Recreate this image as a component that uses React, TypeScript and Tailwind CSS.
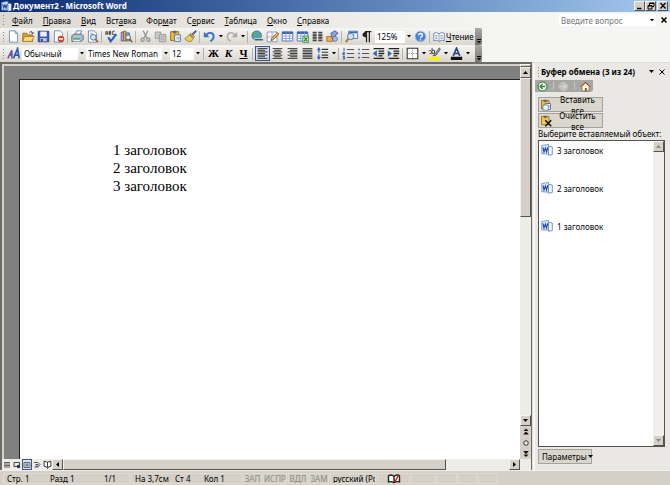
import React from "react";
import clsx from "clsx";

type GlyphProps = { children: React.ReactNode; className?: string };

function Glyph({ children, className = "size-[13px]" }: GlyphProps) {
  return (
    <svg viewBox="0 0 16 16" className={clsx("shrink-0", className)} fill="none" aria-hidden="true">
      {children}
    </svg>
  );
}

const wordDoc = (
  <>
    <path d="M10 3l5 1v10l-5 1z" fill="#fff" stroke="#3f68b8" />
    <path d="M1 2l9-1.5v13L1 13z" fill="#dce8fb" stroke="#5b83cc" />
    <path d="M2.500 4.500l1.500 6 1.800-5 1.600 5 1.600-6" stroke="#1f4ba5" strokeWidth="1.600" />
  </>
);

const sheet = <path d="M3 1h7l3 3v11H3z" fill="#fff" stroke="#6280b0" />;

const clipboard = (
  <>
    <path d="M2 2h10v11H2z" fill="#e8b93e" stroke="#8a651a" />
    <path d="M5 1h4v3H5z" fill="#667" />
    <path d="M7 6h7v8H7z" fill="#fff" stroke="#3a5a9a" />
    <path d="M9 9h4M9 11h4" stroke="#6a89c4" />
  </>
);

const gridLines = (
  <>
    <path d="M1.500 2.500h13v11h-13z" fill="#fff" stroke="#3c62ad" />
    <path d="M1.500 3.500h13" stroke="#3c62ad" strokeWidth="3" />
    <path d="M1.500 7.500h13M1.500 10.500h13M6 3v11M10.500 3v11" stroke="#7e9bd0" />
  </>
);

const icons: Record<string, React.ReactNode> = {
  new: (
    <>
      {sheet}
      <path d="M10 1v3h3" stroke="#6280b0" />
    </>
  ),
  open: (
    <>
      <path d="M1 4h5l1 2h6v8H1z" fill="#d7a33a" stroke="#8d6a1d" />
      <path d="M3 8h12l-3 6H1z" fill="#ffdf7d" stroke="#9b7522" />
      <path d="M9 3c2-2 4-1 4 1m-1.500-1L13 5l1.500-2" stroke="#335" />
    </>
  ),
  save: (
    <>
      <path d="M1.500 1.500h13v13h-13z" fill="#4659b8" stroke="#27367e" />
      <path d="M4 2h8v6H4z" fill="#e9effc" />
      <path d="M4 10h8v4H4z" fill="#bcc7e2" />
      <path d="M5 11h2v3H5z" fill="#27367e" />
    </>
  ),
  permission: (
    <>
      {sheet}
      <circle cx="11" cy="11" r="4" fill="#d9402b" />
      <path d="M8.500 11h5" stroke="#fff" strokeWidth="2" />
    </>
  ),
  print: (
    <>
      <path d="M5 6l2-5h6l-2 5z" fill="#fff" stroke="#51749c" />
      <path d="M1 7l3-2h9l2 2v5l-3 2H1z" fill="#aebdcc" stroke="#4b5f73" />
      <path d="M3 10h8v2H3z" fill="#3fa95b" />
      <path d="M3 13h8" stroke="#e8edf2" strokeWidth="2" />
    </>
  ),
  preview: (
    <>
      {sheet}
      <path d="M5 4h4M5 6h4" stroke="#8da5cc" />
      <circle cx="9" cy="9" r="3.500" fill="#cfe4f7" stroke="#4a5c74" />
      <path d="M11.500 11.500L15 15" stroke="#a0692a" strokeWidth="2" />
    </>
  ),
  spelling: (
    <>
      <path d="M1 6V2h2v4M1 4h2M5 1.500v4h2v-2H5h2v-2zM12 1.500H9.500v4H12" stroke="#333" />
      <path d="M4 9l3 5 7-9" stroke="#2c5fc4" strokeWidth="2.500" />
    </>
  ),
  research: (
    <>
      <path d="M1.500 2.500h3v11h-3z" fill="#b7a5d6" stroke="#5b4a87" />
      <path d="M4.500 1.500h3v12h-3z" fill="#e7bf65" stroke="#7a5d22" />
      <path d="M7.500 3.500h4v10h-4z" fill="#93afd9" stroke="#42639b" />
      <circle cx="10" cy="9" r="3" fill="#dcecf8" stroke="#555" />
      <path d="M12 11l3 4" stroke="#8f5f27" strokeWidth="2" />
    </>
  ),
  cut: (
    <>
      <path d="M5 1l5 9M11 1L6 10" stroke="#909090" strokeWidth="1.500" />
      <circle cx="4.500" cy="12" r="2" stroke="#909090" strokeWidth="1.500" />
      <circle cx="11.500" cy="12" r="2" stroke="#909090" strokeWidth="1.500" />
    </>
  ),
  copy: (
    <>
      <path d="M1.500 2.500h7v8h-7z" fill="#c9c9c9" stroke="#999" />
      <path d="M6.500 5.500h8v9h-8z" fill="#ccc" stroke="#929292" />
      <path d="M8 8h5M8 10h5M8 12h5" stroke="#aaa" />
    </>
  ),
  paste: clipboard,
  brush: (
    <>
      <path d="M15 1l-5 5" stroke="#4b5c9b" strokeWidth="2.500" />
      <path d="M8 4l5 4-4 6c-3 1-6-1-8-3z" fill="#ebce53" stroke="#91752b" />
      <path d="M7 6l4 3" stroke="#7b7b90" strokeWidth="2" />
    </>
  ),
  undo: (
    <>
      <path d="M4 6c4-5 10-2 9 3-.4 2-2 4-4 5" stroke="#3a70cc" strokeWidth="2.400" />
      <path d="M1 2v7h7z" fill="#3a70cc" />
    </>
  ),
  redo: (
    <>
      <path d="M12 6C8 1 2 4 3 9c.4 2 2 4 4 5" stroke="#b0b0b0" strokeWidth="2" />
      <path d="M15 2v7H8z" fill="#aaa" />
    </>
  ),
  link: (
    <>
      <circle cx="7" cy="7" r="5.800" fill="#4f9bd0" stroke="#31638f" />
      <path d="M3 4c2-3 5-2 5 0s-4 2-3 5c-2 0-3-2-2-5zM9 7l3-2v5l-3 1z" fill="#58b45f" />
      <path d="M5 12h4m1 0h4" stroke="#dce3e8" strokeWidth="4" strokeLinecap="round" />
      <path d="M5 12h4m1 0h4" stroke="#4d5f6d" strokeWidth="2" strokeLinecap="round" />
    </>
  ),
  borders: (
    <>
      <path d="M1.500 2.500h12v12h-12z" fill="#fff" stroke="#6b87b9" />
      <path d="M1 8.500h12M7.500 2v12" stroke="#8da5cf" />
      <path d="M14 3l-7 7-1 3 3-1 7-7z" fill="#e9b355" stroke="#80571d" />
    </>
  ),
  table: gridLines,
  excel: (
    <>
      {gridLines}
      <path d="M8.500 7.500h7v8h-7z" fill="#e4f4e3" stroke="#29853b" />
      <path d="M10 9l4 5m0-5l-4 5" stroke="#29853b" strokeWidth="1.500" />
    </>
  ),
  columns: (
    <path d="M2 3h5M2 5h5M2 7h5M2 9h5M2 11h5M2 13h5M9 3h5M9 5h5M9 7h5M9 9h5M9 11h5M9 13h5" stroke="#444" strokeWidth="1.400" />
  ),
  drawing: (
    <>
      <path d="M1 8h7v6H1z" fill="#efb44b" stroke="#9a6b1e" />
      <path d="M6 4l5-3 4 3-3 2-1 7-3-2z" fill="#8e9ee0" stroke="#424c94" />
      <circle cx="11" cy="11" r="3" fill="#aebbe9" stroke="#5662a8" />
    </>
  ),
  map: (
    <>
      <path d="M4.500 1.500h11v9h-11z" fill="#eaf2fd" stroke="#3c6db6" />
      <path d="M5 3h10" stroke="#3c6db6" strokeWidth="2" />
      <circle cx="7" cy="8" r="4" fill="#c9e2f5" stroke="#4d6a8c" />
      <path d="M4 11l-3 4" stroke="#b07a34" strokeWidth="2.500" />
    </>
  ),
  pilcrow: (
    <>
      <path d="M8 2v13M11.500 2v13M6 2h8" stroke="#222" strokeWidth="1.500" />
      <path d="M8 2v7C1 9 2 2 8 2z" fill="#222" />
    </>
  ),
  help: (
    <>
      <circle cx="8" cy="8" r="6.500" fill="#4c82d6" stroke="#9db9e6" />
      <path d="M5.800 6.500c0-3 4.600-3 4.600 0 0 1.500-2.300 1.500-2.300 3.500M8 11.500v1.500" stroke="#fff" strokeWidth="1.700" />
    </>
  ),
  book: (
    <>
      <path d="M1 3c3-1 5-1 7 1 2-2 4-2 7-1v10c-3-1-5-1-7 1-2-2-4-2-7-1z" fill="#fff" stroke="#4b68a2" />
      <path d="M8 4v10M3 6h3M3 8h3M3 10h3M10 6h3M10 8h3M10 10h3" stroke="#6d85b4" />
    </>
  ),
  styles: (
    <>
      <path d="M1 14L6 4v10M3 10h3" stroke="#7154a6" strokeWidth="2" />
      <path d="M8 14L13 2l2 12M9 10h5" stroke="#2e58b5" strokeWidth="2" />
    </>
  ),
  left: <path d="M2 2h12M2 4h9M2 6h12M2 8h9M2 10h12M2 12h9M2 14h12" stroke="#333" strokeWidth="1.200" />,
  center: <path d="M2 2h12M4 4h8M2 6h12M4 8h8M2 10h12M4 12h8M2 14h12" stroke="#333" strokeWidth="1.200" />,
  right: <path d="M2 2h12M5 4h9M2 6h12M5 8h9M2 10h12M5 12h9M2 14h12" stroke="#333" strokeWidth="1.200" />,
  justify: <path d="M2 2h12M2 4h12M2 6h12M2 8h12M2 10h12M2 12h12M2 14h12" stroke="#333" strokeWidth="1.200" />,
  spacing: (
    <>
      <path d="M7 3h8M7 6.500h8M7 10h8M7 13h8" stroke="#333" strokeWidth="1.400" />
      <path d="M3.500 3v10" stroke="#2e62bd" strokeWidth="1.500" strokeDasharray="4 2" />
      <path d="M3.500 0L6 4H1zM3.500 16L6 12H1z" fill="#2e62bd" />
    </>
  ),
  numbering: (
    <>
      <path d="M6 3h9M6 8h9M6 13h9" stroke="#555" strokeWidth="1.300" />
      <path d="M2.500 1v4M1 6.500h2v1.500H1v1.500h2.500M1 11.500h2v3.500H1m0-2h2" stroke="#2e62bd" strokeWidth="1.200" />
    </>
  ),
  bullets: (
    <>
      <path d="M6 3h9M6 8h9M6 13h9" stroke="#555" strokeWidth="1.300" />
      <path d="M1.500 2h2v2h-2zM1.500 7h2v2h-2zM1.500 12h2v2h-2z" fill="#2e62bd" />
    </>
  ),
  outdent: (
    <>
      <path d="M2 2h13M8 5h7M8 8h7M8 11h5M2 14h13" stroke="#222" strokeWidth="1.600" />
      <path d="M6 4L1 8l5 4z" fill="#2e62bd" />
    </>
  ),
  indent: (
    <>
      <path d="M2 2h13M8 5h7M8 8h7M8 11h5M2 14h13" stroke="#222" strokeWidth="1.600" />
      <path d="M1 4l5 4-5 4z" fill="#2e62bd" />
    </>
  ),
  outline: (
    <>
      <path d="M1.500 1.500h13v13h-13z" fill="#fff" stroke="#333" strokeWidth="1.300" />
      <path d="M3 8h11M8 3v11" stroke="#777" strokeDasharray="1.500 1.500" />
    </>
  ),
  highlight: (
    <>
      <path d="M1 5c2-2 4 0 3 3H2m3-7v7h3V4H5" stroke="#333" />
      <path d="M14 1L8 9l-2 2 4-1 5-7z" fill="#9aa4c0" stroke="#444c62" />
      <path d="M1 12h14v4H1z" fill="#fff200" />
    </>
  ),
  fontColor: (
    <>
      <path d="M4 11L8 1.500 12 11M5.500 8h5" stroke="#26428a" strokeWidth="2" />
      <path d="M1 12h14v4H1z" fill="#111" />
    </>
  ),
  pasteAll: (
    <>
      {clipboard}
      <path d="M4 8h7v7H4z" fill="#f4f8ff" stroke="#57719f" />
    </>
  ),
  clearAll: (
    <>
      <path d="M2 2h10v11H2z" fill="#f3c649" stroke="#8a651a" />
      <path d="M5 1h4v3H5z" fill="#667" />
      <path d="M7 7l8 8m0-8l-8 8" stroke="#111" strokeWidth="2" />
    </>
  ),
  back: (
    <>
      <circle cx="8" cy="8" r="6.500" fill="#f2faef" stroke="#35723a" strokeWidth="1.500" />
      <path d="M12 8H5m3-3.500L4.500 8 8 11.500" stroke="#2c8a37" strokeWidth="2" />
    </>
  ),
  forward: (
    <>
      <circle cx="8" cy="8" r="6" fill="#bcbcbc" stroke="#cfcfcf" />
      <path d="M4 8h7M8 4.500l3.500 3.500L8 11.500" stroke="#ddd" strokeWidth="1.500" />
    </>
  ),
  home: (
    <>
      <path d="M3 8v6.500h10V8" fill="#fff" stroke="#7b5c40" />
      <path d="M1 9l7-7 7 7" fill="#fff1c6" stroke="#9c4c27" strokeWidth="1.500" />
      <path d="M7 10h3v5H7z" fill="#95602a" />
    </>
  ),
};

function Caret({ className = "w-[5px]" }: { className?: string }) {
  return (
    <svg viewBox="0 0 5 3" className={clsx("shrink-0", className)} aria-hidden="true">
      <path d="M0 0h5L2.500 3z" fill="currentColor" />
    </svg>
  );
}

function Grip() {
  return (
    <span className="flex w-[6px] shrink-0 flex-col items-center gap-[2px]">
      <i className="size-px bg-[#8a8780]" />
      <i className="size-px bg-[#8a8780]" />
      <i className="size-px bg-[#8a8780]" />
      <i className="size-px bg-[#8a8780]" />
    </span>
  );
}

function Separator() {
  return <span className="mx-px h-3 w-[2px] shrink-0 border-l border-[#b5b2aa]" />;
}

function Tool({ icon, label, active }: { icon: string; label: string; active?: boolean }) {
  return (
    <button
      type="button"
      aria-label={label}
      className={clsx(
        "flex h-[15px] w-[15px] shrink-0 items-center justify-center",
        active && "border border-[#3a548e] bg-[#d5dae8]"
      )}
    >
      <Glyph>{icons[icon]}</Glyph>
    </button>
  );
}

function MenuArrow({ label }: { label: string }) {
  return (
    <button type="button" aria-label={label} className="flex h-[15px] w-[7px] shrink-0 items-center justify-center">
      <Caret className="w-1" />
    </button>
  );
}

function Combo({ label, value, className }: { label: string; value: string; className: string }) {
  return (
    <label className={clsx("mr-px flex h-3 shrink-0 items-center", className)}>
      <select aria-label={label} className="h-3 min-w-0 flex-1 appearance-none bg-white pl-[2px] leading-3">
        <option>{value}</option>
      </select>
      <span className="flex w-[7px] justify-center">
        <Caret className="w-1" />
      </span>
    </label>
  );
}

function ToolbarEnd() {
  return (
    <button
      type="button"
      aria-label="Параметры панели инструментов"
      className="ml-auto flex h-[17px] w-[7px] shrink-0 flex-col items-center justify-end gap-px rounded-r-[2px] bg-linear-to-b from-[#aaa8a3] to-[#777571] pb-[2px]"
    >
      <span className="h-px w-1 bg-black" />
      <Caret className="w-1" />
    </button>
  );
}

const toolbarClass =
  "flex h-[17px] w-[482px] items-center rounded-r-[2px] bg-linear-to-b from-[#f7f6f4] to-[#d9d6cd]";

function StandardToolbar() {
  return (
    <div role="toolbar" className={toolbarClass}>
      <Grip />
      <Tool icon="new" label="Создать" />
      <Tool icon="open" label="Открыть" />
      <Tool icon="save" label="Сохранить" />
      <Tool icon="permission" label="Разрешения" />
      <Separator />
      <Tool icon="print" label="Печать" />
      <Tool icon="preview" label="Просмотр" />
      <Separator />
      <Tool icon="spelling" label="Правописание" />
      <Tool icon="research" label="Справочные материалы" />
      <Separator />
      <Tool icon="cut" label="Вырезать" />
      <Tool icon="copy" label="Копировать" />
      <Tool icon="paste" label="Вставить" />
      <Tool icon="brush" label="Формат по образцу" />
      <Separator />
      <Tool icon="undo" label="Отменить" />
      <MenuArrow label="Отменить действия" />
      <Tool icon="redo" label="Вернуть" />
      <MenuArrow label="Вернуть действия" />
      <Separator />
      <Tool icon="link" label="Гиперссылка" />
      <Tool icon="borders" label="Таблицы и границы" />
      <Tool icon="table" label="Добавить таблицу" />
      <Tool icon="excel" label="Добавить таблицу Excel" />
      <Tool icon="columns" label="Колонки" />
      <Tool icon="drawing" label="Рисование" />
      <Separator />
      <Tool icon="map" label="Схема документа" />
      <Tool icon="pilcrow" label="Непечатаемые знаки" />
      <Combo label="Масштаб" value="125%" className="ml-px w-[37px]" />
      <Tool icon="help" label="Справка" />
      <Separator />
      <button type="button" className="flex items-center gap-px pl-px">
        <Glyph className="size-3">{icons.book}</Glyph>
        <span>
          <u>Ч</u>тение
        </span>
      </button>
      <ToolbarEnd />
    </div>
  );
}

function FormattingToolbar() {
  const letterClass = "h-[15px] w-[15px] shrink-0 text-center font-['Liberation_Serif',serif] text-[11px] leading-[15px] font-bold";
  return (
    <div role="toolbar" className={toolbarClass}>
      <Grip />
      <Tool icon="styles" label="Стили и форматирование" />
      <Combo label="Стиль" value="Обычный" className="ml-px w-[63px]" />
      <Combo label="Шрифт" value="Times New Roman" className="w-[83px]" />
      <Combo label="Размер шрифта" value="12" className="w-[31px]" />
      <Separator />
      <button type="button" className={letterClass}>
        Ж
      </button>
      <button type="button" className={clsx(letterClass, "italic")}>
        К
      </button>
      <button type="button" className={clsx(letterClass, "underline")}>
        Ч
      </button>
      <Separator />
      <Tool icon="left" label="По левому краю" active />
      <Tool icon="center" label="По центру" />
      <Tool icon="right" label="По правому краю" />
      <Tool icon="justify" label="По ширине" />
      <Tool icon="spacing" label="Междустрочный интервал" />
      <MenuArrow label="Выбор интервала" />
      <Separator />
      <Tool icon="numbering" label="Нумерация" />
      <Tool icon="bullets" label="Маркеры" />
      <Tool icon="outdent" label="Уменьшить отступ" />
      <Tool icon="indent" label="Увеличить отступ" />
      <Separator />
      <Tool icon="outline" label="Внешние границы" />
      <MenuArrow label="Выбор границ" />
      <Tool icon="highlight" label="Выделение цветом" />
      <MenuArrow label="Выбор выделения" />
      <Tool icon="fontColor" label="Цвет шрифта" />
      <MenuArrow label="Выбор цвета" />
      <ToolbarEnd />
    </div>
  );
}

const raised = "border border-t-[#f5f3ee] border-l-[#f5f3ee] border-r-[#55534f] border-b-[#55534f] bg-[#d4d0c8]";

function TitleBar() {
  const buttonClass = clsx("flex h-[10px] w-[11px] items-center justify-center", raised);
  return (
    <header className="flex h-3 shrink-0 items-center bg-linear-to-r from-[#0d2b72] to-[#a6caf0] pr-[2px] text-white">
      <Glyph className="ml-px size-[11px]">{wordDoc}</Glyph>
      <h1 className="ml-px flex-1 text-[8px] leading-3 font-bold">Документ2 - Microsoft Word</h1>
      <button type="button" aria-label="Свернуть" className={buttonClass}>
        <Glyph className="size-2">
          <path d="M2 13h9" stroke="#000" strokeWidth="3" />
        </Glyph>
      </button>
      <button type="button" aria-label="Восстановить" className={buttonClass}>
        <Glyph className="size-2">
          <path d="M5 6V2h9v7h-4M5 3h9M2 7h8v7H2zM2 8h8" stroke="#000" strokeWidth="2" />
        </Glyph>
      </button>
      <button type="button" aria-label="Закрыть" className={clsx(buttonClass, "ml-px")}>
        <Glyph className="size-2">
          <path d="M3 2l10 11M13 2L3 13" stroke="#000" strokeWidth="2.500" />
        </Glyph>
      </button>
    </header>
  );
}

// [text before the access key, access key, text after it]
const menus = [
  ["", "Ф", "айл"],
  ["", "П", "равка"],
  ["", "В", "ид"],
  ["Вст", "а", "вка"],
  ["Фор", "м", "ат"],
  ["С", "е", "рвис"],
  ["", "Т", "аблица"],
  ["", "О", "кно"],
  ["", "С", "правка"],
];

function MenuBar() {
  return (
    <div className="flex h-4 shrink-0 items-center pr-[2px]">
      <Grip />
      <nav className="ml-[6px] flex flex-1 gap-[10px]">
        {menus.map(([before, key, after]) => (
          <button type="button" key={before + key + after}>
            {before}
            <u>{key}</u>
            {after}
          </button>
        ))}
      </nav>
      <input
        aria-label="Введите вопрос"
        placeholder="Введите вопрос"
        className="h-3 w-[88px] bg-white pl-[2px] placeholder:text-[#777]"
      />
      <button type="button" aria-label="Список вопросов" className="flex h-3 w-[9px] items-center justify-center bg-white">
        <Caret className="w-1" />
      </button>
      <button type="button" aria-label="Закрыть окно" className="flex w-3 justify-end">
        <Glyph className="size-2">
          <path d="M3 3l10 10M13 3L3 13" stroke="#000" strokeWidth="3" />
        </Glyph>
      </button>
    </div>
  );
}

function ScrollButton({ label, turn, muted }: { label: string; turn?: string; muted?: boolean }) {
  return (
    <button
      type="button"
      aria-label={label}
      className={clsx("flex size-[11px] shrink-0 items-center justify-center", raised, muted && "text-[#8a8780]")}
    >
      <Caret className={clsx("w-[5px]", turn)} />
    </button>
  );
}

function ViewButtons() {
  const buttonClass = "flex h-[11px] w-[10px] items-center justify-center";
  return (
    <>
      <button type="button" aria-label="Обычный режим" className={buttonClass}>
        <Glyph className="size-2">
          <path d="M2 3h12M2 6h12M2 9h12M2 12h12" stroke="#333" strokeWidth="1.500" />
        </Glyph>
      </button>
      <button type="button" aria-label="Веб-документ" className={buttonClass}>
        <Glyph className="size-2">
          <path d="M2 3h11v8H2z" stroke="#333" strokeWidth="1.800" />
          <circle cx="11" cy="11" r="3.500" fill="#335" />
        </Glyph>
      </button>
      <button
        type="button"
        aria-label="Разметка страницы"
        className={clsx(buttonClass, "border border-[#3a548e] bg-[#dde1ec]")}
      >
        <Glyph className="size-2">
          <path d="M2 3h12v10H2zM5 6h6M5 8h6M5 10h6" stroke="#444" strokeWidth="1.500" />
        </Glyph>
      </button>
      <button type="button" aria-label="Структура" className={buttonClass}>
        <Glyph className="size-2">
          <path d="M2 3h8l4 4-4 5H3M5 7h6M5 10h5" stroke="#333" strokeWidth="1.600" />
        </Glyph>
      </button>
      <button type="button" aria-label="Режим чтения" className={buttonClass}>
        <Glyph className="size-[9px]">
          <path d="M2 2l6 2 6-2v9l-4 1-2 3-2-3-4-1zM8 4v9" fill="#fff" stroke="#222" strokeWidth="1.600" />
        </Glyph>
      </button>
    </>
  );
}

function DocumentArea() {
  const browseClass = "flex h-[11px] items-center justify-center";
  return (
    <main className="flex min-w-0 flex-1 flex-col border-t-2 border-l-2 border-[#6e6c66] border-r border-r-[#6e6c66] bg-[#d4d0c8]">
      <div className="flex min-h-0 flex-1">
        <div className="mt-[2px] ml-[2px] min-w-0 flex-1 bg-[#808080] pt-[13px] pl-[15px]">
          <article className="h-full border-t border-l border-[#222] bg-white pt-[61px] pl-[93px] font-['Liberation_Serif',serif] text-[15px] leading-[18px]">
            <p>1 заголовок</p>
            <p>2 заголовок</p>
            <p>3 заголовок</p>
          </article>
        </div>
        <div className="flex w-[11px] shrink-0 flex-col bg-[#eeece8]">
          <div className={clsx("h-[3px] shrink-0", raised)} />
          <ScrollButton label="Вверх" turn="rotate-180" />
          <div className={clsx("h-[139px] shrink-0", raised)} />
          <div className="flex-1" />
          <ScrollButton label="Вниз" />
          <div className="shrink-0 bg-[#d4d0c8]">
            <button type="button" aria-label="Предыдущая страница" className={clsx(browseClass, "w-full")}>
              <Glyph className="size-2">
                <path d="M8 1l5 5H3zM8 7l5 5H3zM3 12h10v1H3z" fill="#111" />
              </Glyph>
            </button>
            <button type="button" aria-label="Объект перехода" className={clsx(browseClass, "w-full")}>
              <Glyph className="size-2">
                <circle cx="8" cy="8" r="4.500" fill="#eee" stroke="#333" strokeWidth="2" />
              </Glyph>
            </button>
            <button type="button" aria-label="Следующая страница" className={clsx(browseClass, "w-full")}>
              <Glyph className="size-2">
                <path d="M3 2h10v1H3zM3 3h10L8 8zM3 9h10l-5 5z" fill="#111" />
              </Glyph>
            </button>
          </div>
        </div>
      </div>
      <div className="flex h-[11px] shrink-0 bg-[#eeece8] pr-[11px]">
        <ViewButtons />
        <ScrollButton label="Влево" turn="rotate-90" />
        <div className={clsx("w-[74%]", raised)} />
        <div className="flex-1" />
        <ScrollButton label="Вправо" turn="-rotate-90" />
      </div>
    </main>
  );
}

const clips = ["3 заголовок", "2 заголовок", "1 заголовок"];

function ClipboardPane() {
  const buttonClass = "flex h-[15px] items-center gap-px border border-[#a5a299] bg-[#d9d6ce]";
  return (
    <aside className="mt-px ml-px flex w-[137px] shrink-0 flex-col border-l-2 border-[#f8f7f5] bg-[#eae8e4]">
      <div className="flex h-[17px] shrink-0 items-center pr-1">
        <Grip />
        <h2 className="flex-1 text-[8px] font-bold">Буфер обмена (3 из 24)</h2>
        <button type="button" aria-label="Другие области задач" className="flex w-3 justify-center">
          <Caret />
        </button>
        <button type="button" aria-label="Закрыть область" className="flex w-[9px] justify-end">
          <Glyph className="size-2">
            <path d="M3 3l10 10M13 3L3 13" stroke="#000" strokeWidth="2" />
          </Glyph>
        </button>
      </div>
      <div className="flex h-[12px] w-[58px] shrink-0 items-center justify-around rounded-br-[3px] bg-[#a8a7a4]">
        <button type="button" aria-label="Назад">
          <Glyph className="size-[11px]">{icons.back}</Glyph>
        </button>
        <span className="h-2 border-l border-[#c6c5c2]" />
        <button type="button" aria-label="Вперед">
          <Glyph className="size-[11px]">{icons.forward}</Glyph>
        </button>
        <span className="h-2 border-l border-[#c6c5c2]" />
        <button type="button" aria-label="Домой">
          <Glyph className="size-[11px]">{icons.home}</Glyph>
        </button>
      </div>
      <div className="flex min-h-0 flex-1 flex-col pt-[5px] pr-[5px] pb-[6px] pl-[3px]">
        <div className="flex w-[65px] flex-col gap-px">
          <button type="button" className={buttonClass}>
            <Glyph className="ml-px size-3">{icons.pasteAll}</Glyph>
            Вставить все
          </button>
          <button type="button" className={buttonClass}>
            <Glyph className="ml-px size-3">{icons.clearAll}</Glyph>
            Очистить все
          </button>
        </div>
        <p id="clips-label" className="leading-3">
          Выберите вставляемый объект:
        </p>
        <div className="flex min-h-0 flex-1 border border-[#55534f] bg-white">
          <ul aria-labelledby="clips-label" className="flex-1 pt-[3px] pl-[2px]">
            {clips.map((clip) => (
              <li key={clip} className="flex h-[38px] items-start">
                <button type="button" className="flex items-center gap-1">
                  <Glyph className="size-3">{wordDoc}</Glyph>
                  {clip}
                </button>
              </li>
            ))}
          </ul>
          <div className="flex w-[11px] flex-col justify-between bg-[#f1efec]">
            <ScrollButton label="Прокрутить вверх" turn="rotate-180" muted />
            <ScrollButton label="Прокрутить вниз" muted />
          </div>
        </div>
        <button type="button" className={clsx(buttonClass, "mt-[2px] w-[54px] shrink-0 justify-between px-[3px]")}>
          Параметры
          <Caret />
        </button>
      </div>
    </aside>
  );
}

function StatusBar() {
  const cell = "flex h-[11px] shrink-0 items-center border border-[#dedbd4]";
  return (
    <footer className="flex h-[15px] shrink-0 items-center gap-px border-t border-[#f2f0ec] bg-[#d4d0c8] pl-[3px]">
      <div className={clsx(cell, "w-[127px]")}>
        <span className="w-[43px] pl-[3px]">Стр. 1</span>
        <span className="w-[54px] pl-[3px]">Разд 1</span>
        <span className="pl-[3px]">1/1</span>
      </div>
      <div className={clsx(cell, "w-[111px]")}>
        <span className="w-10 pl-[3px]">На 3,7см</span>
        <span className="w-[29px] pl-[3px]">Ст 4</span>
        <span className="pl-[3px]">Кол 1</span>
      </div>
      <div className={clsx(cell, "w-[19px] justify-center text-[#8e8b84]")}>ЗАП</div>
      <div className={clsx(cell, "w-6 justify-center text-[#8e8b84]")}>ИСПР</div>
      <div className={clsx(cell, "w-5 justify-center text-[#8e8b84]")}>ВДЛ</div>
      <div className={clsx(cell, "w-5 justify-center text-[#8e8b84]")}>ЗАМ</div>
      <div className={clsx(cell, "w-[46px] overflow-hidden pl-[2px] whitespace-nowrap")}>русский (Ро</div>
      <div className={clsx(cell, "w-[33px] justify-center")}>
        <Glyph className="h-[11px] w-[14px]">
          <path d="M0 4c3-2 6-1 8 1 2-2 5-3 8-1v9c-3-1-6 0-8 1-2-1-5-2-8-1z" fill="#fff" stroke="#222" strokeWidth="2" />
          <path d="M8 5v8" stroke="#222" strokeWidth="2" />
          <path d="M8 9l2 3 5-10" stroke="#b21f1f" strokeWidth="2" />
        </Glyph>
      </div>
      <div className={clsx(cell, "w-[25px]")} />
      <div className={clsx(cell, "w-5")} />
      <div className={clsx(cell, "w-[19px]")} />
      <div className={clsx(cell, "w-5")} />
    </footer>
  );
}

export default function App() {
  return (
    <div className="flex h-screen flex-col overflow-hidden bg-linear-to-r from-[#dcd9d2] to-[#f5f5f3] to-75% font-['Noto_Sans',sans-serif] text-[8px] leading-[11px] text-black">
      <TitleBar />
      <MenuBar />
      <StandardToolbar />
      <FormattingToolbar />
      <div className="flex min-h-0 flex-1 bg-[#dedbd5]">
        <DocumentArea />
        <ClipboardPane />
      </div>
      <StatusBar />
    </div>
  );
}
